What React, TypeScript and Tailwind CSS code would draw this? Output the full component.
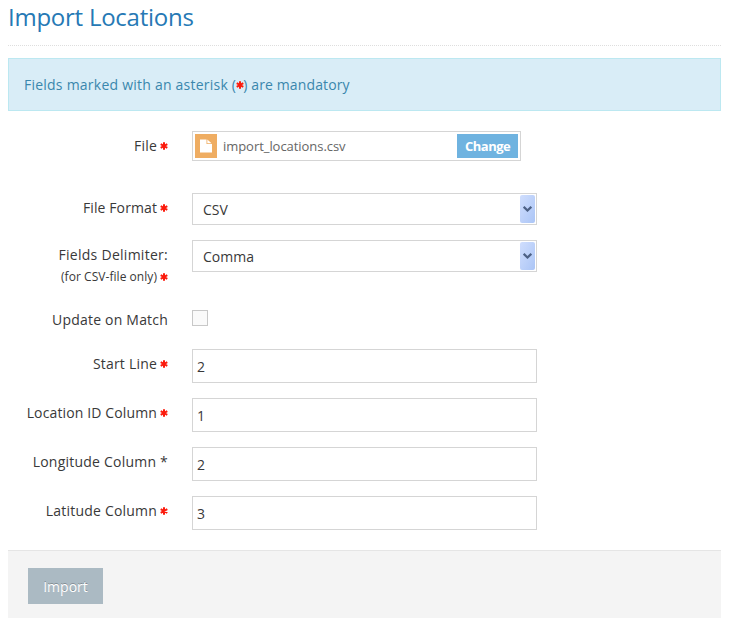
import type { ReactNode } from 'react';

function Star() {
  return (
    <svg className="size-2 shrink-0" viewBox="0 0 8 8" fill="none" stroke="#fb1b0d" strokeWidth="2">
      <path d="M4 .3v7.400M.7 2.200l6.600 3.600M7.300 2.200.7 5.800" />
    </svg>
  );
}

function Row({ label, height, children }: { label: ReactNode; height: string; children: ReactNode }) {
  return (
    <div className={`flex ${height}`}>
      <div className="mr-6 w-40 shrink-0 pt-[5px] text-right leading-5 whitespace-nowrap">{label}</div>
      {children}
    </div>
  );
}

function Required({ children, tracking = '' }: { children: ReactNode; tracking?: string }) {
  return (
    <span className="flex items-center justify-end gap-[3px]">
      <span className={tracking}>{children}</span>
      <Star />
    </span>
  );
}

function Select({ value }: { value: string }) {
  return (
    <div className="flex h-8 w-[345px] items-center justify-between border border-[#d5d5d5] pr-px pl-[10px] text-[14px]">
      <span>{value}</span>
      <span className="flex h-7 w-[15px] items-center justify-center rounded-[2px] bg-linear-to-br from-[#d0defd] to-[#abc5f6]">
        <svg width="9" height="6" viewBox="0 0 9 6" fill="none" stroke="#4d6185" strokeWidth="2.200">
          <path d="M0.7 0.8 4.5 4.5 8.3 0.8" />
        </svg>
      </span>
    </div>
  );
}

function Input({ value }: { value: string }) {
  return (
    <div className="h-[34px] w-[345px] border border-[#d5d5d5] px-1 pt-[7px] text-[14px] leading-5">{value}</div>
  );
}

export default function App() {
  return (
    <div className="h-[618px] w-[730px] overflow-hidden bg-white pr-[9px] pl-2 font-['Open_Sans',sans-serif] text-[14px] text-[#393939]">
      <h1 className="h-[46px] border-b border-dotted border-[#dedede] pt-px text-[24px] leading-[31px] tracking-[-0.25px] text-[#2679b5]">
        Import Locations
      </h1>
      <div className="mt-3 flex h-[53px] items-center border border-[#bce8f1] bg-[#d9edf7] px-[15px] text-[#3a87ad]">
        <span className="tracking-[0.23px]">Fields marked with an asterisk (</span>
        <span className="-mx-[0.5px] flex">
          <Star />
        </span>
        <span className="tracking-[0.13px]">) are mandatory</span>
      </div>
      <div className="mt-5">
        <Row label={<Required tracking="tracking-[0.2px]">File</Required>} height="h-[62px]">
          <div className="flex h-[30px] w-[329px] items-center border border-[#d5d5d5] px-[2px] text-[13px] text-[#666]">
            <span className="flex h-6 w-[22px] items-center justify-center bg-[#efad62]">
              <svg width="12" height="14" viewBox="0 0 12 14" fill="#fff">
                <path d="M0 .5h6.500v4.500H12V13.500H0z" />
                <path d="M7.300 .5 11.500 4.300H7.300z" />
              </svg>
            </span>
            <span className="ml-[6px] flex-1 pt-px tracking-[-0.05px]">import_locations.csv</span>
            <span className="h-6 w-[61px] bg-[#6fb3e0] pl-[8px] font-bold leading-[25px] tracking-[-0.5px] text-white">
              Change
            </span>
          </div>
        </Row>
        <Row label={<Required tracking="tracking-[0.1px]">File Format</Required>} height="h-[47px]">
          <Select value="CSV" />
        </Row>
        <Row
          label={
            <>
              <div className="tracking-[0.27px]">Fields Delimiter:</div>
              <div className="text-[12px] leading-[23px]">
                <Required tracking="tracking-[0.05px]">(for CSV-file only)</Required>
              </div>
            </>
          }
          height="h-[65px]"
        >
          <Select value="Comma" />
        </Row>
        <Row label={<span className="tracking-[0.2px]">Update on Match</span>} height="h-[44px]">
          <div className="mt-[5px] size-4 border border-[#c8c8c8] bg-[#fafafa]" />
        </Row>
        <Row label={<Required tracking="tracking-[0.2px]">Start Line</Required>} height="h-[49px]">
          <Input value="2" />
        </Row>
        <Row label={<Required tracking="tracking-[0.13px]">Location ID Column</Required>} height="h-[49px]">
          <Input value="1" />
        </Row>
        <Row label={<span className="tracking-[0.22px]">Longitude Column *</span>} height="h-[49px]">
          <Input value="2" />
        </Row>
        <Row label={<Required tracking="tracking-[0.2px]">Latitude Column</Required>} height="h-[54px]">
          <Input value="3" />
        </Row>
      </div>
      <div className="h-[68px] border-t border-[#e5e5e5] bg-[#f4f4f4] px-5 pt-[17px]">
        <button className="h-9 w-[75px] bg-[#abbac3] text-[14px] text-white [text-shadow:0_-1px_0_rgba(0,0,0,0.25)]">
          Import
        </button>
      </div>
    </div>
  );
}
